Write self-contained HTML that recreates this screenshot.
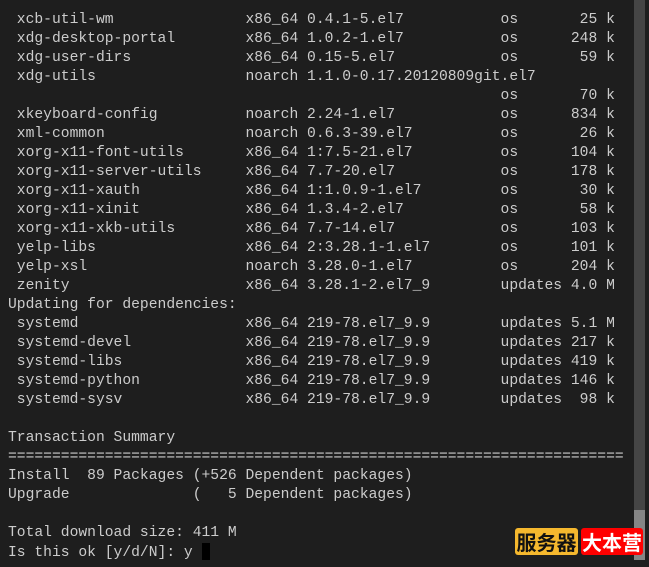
<!DOCTYPE html>
<html><head><meta charset="utf-8"><style>
html,body{margin:0;padding:0;background:#1e1e1e;width:649px;height:567px;overflow:hidden}
pre{position:absolute;left:8px;top:11px;margin:0;font-family:"Liberation Mono",monospace;font-size:14.67px;line-height:19px;color:#cccccc}
.track{position:absolute;left:634px;top:0;width:11px;height:510px;background:#454545}
.thumb{position:absolute;left:634px;top:510px;width:11px;height:50px;background:#858585}
.cur{display:inline-block;width:8px;height:17px;background:#000;vertical-align:-4px}
.wm{position:absolute;top:528px;height:27px;font-family:"Noto Sans CJK SC",sans-serif;font-weight:bold;font-size:20px;line-height:27px;text-align:center;border-radius:3px}
</style></head><body>
<pre> xcb-util-wm               x86_64 0.4.1-5.el7           os       25 k
 xdg-desktop-portal        x86_64 1.0.2-1.el7           os      248 k
 xdg-user-dirs             x86_64 0.15-5.el7            os       59 k
 xdg-utils                 noarch 1.1.0-0.17.20120809git.el7
                                                        os       70 k
 xkeyboard-config          noarch 2.24-1.el7            os      834 k
 xml-common                noarch 0.6.3-39.el7          os       26 k
 xorg-x11-font-utils       x86_64 1:7.5-21.el7          os      104 k
 xorg-x11-server-utils     x86_64 7.7-20.el7            os      178 k
 xorg-x11-xauth            x86_64 1:1.0.9-1.el7         os       30 k
 xorg-x11-xinit            x86_64 1.3.4-2.el7           os       58 k
 xorg-x11-xkb-utils        x86_64 7.7-14.el7            os      103 k
 yelp-libs                 x86_64 2:3.28.1-1.el7        os      101 k
 yelp-xsl                  noarch 3.28.0-1.el7          os      204 k
 zenity                    x86_64 3.28.1-2.el7_9        updates 4.0 M
Updating for dependencies:
 systemd                   x86_64 219-78.el7_9.9        updates 5.1 M
 systemd-devel             x86_64 219-78.el7_9.9        updates 217 k
 systemd-libs              x86_64 219-78.el7_9.9        updates 419 k
 systemd-python            x86_64 219-78.el7_9.9        updates 146 k
 systemd-sysv              x86_64 219-78.el7_9.9        updates  98 k

Transaction Summary
======================================================================
Install  89 Packages (+526 Dependent packages)
Upgrade              (   5 Dependent packages)

Total download size: 411 M
Is this ok [y/d/N]: y <span class="cur"></span></pre>
<div class="track"></div><div class="thumb"></div>
<div class="wm" style="left:515px;width:63px;background:#f5b82e;color:#111">服务器</div>
<div class="wm" style="left:581px;width:62px;background:#f00;color:#fff">大本营</div>
</body></html>
